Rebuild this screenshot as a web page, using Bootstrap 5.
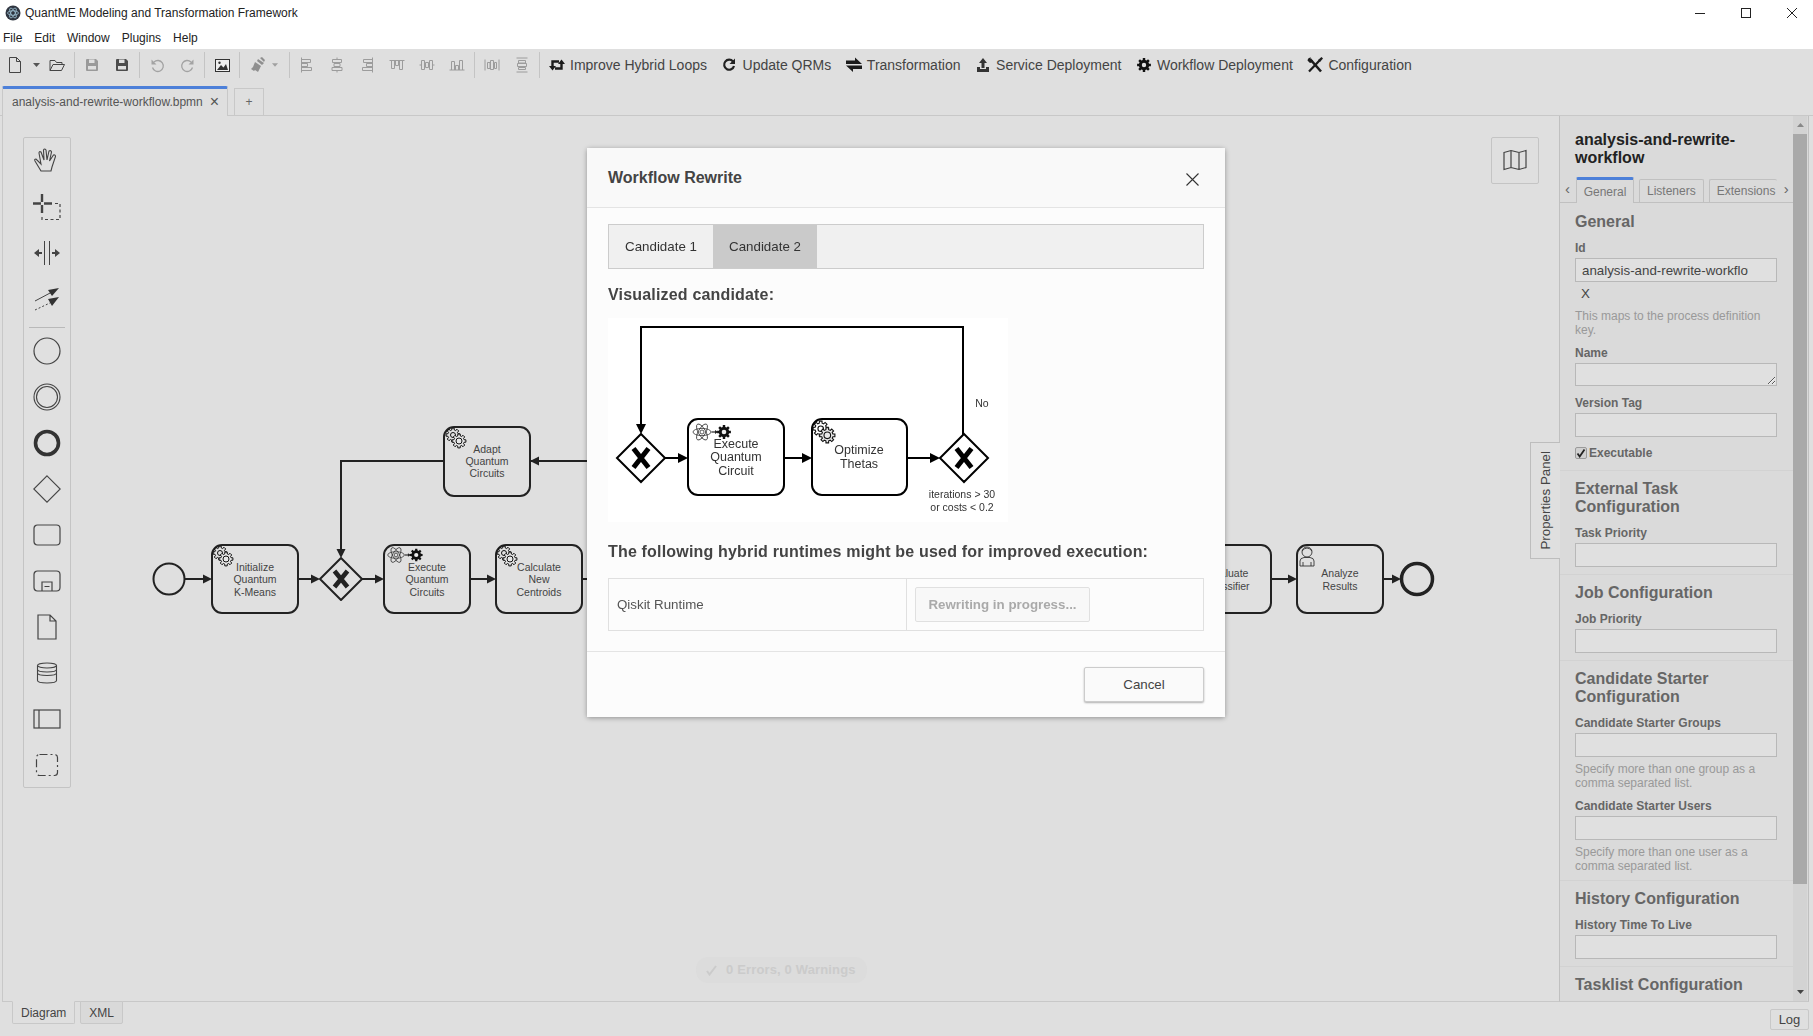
<!DOCTYPE html>
<html lang="en">
<head>
<meta charset="UTF-8" />
<title>QuantME Modeling and Transformation Framework</title>
<link href="https://cdn.jsdelivr.net/npm/bootstrap@5.3.2/dist/css/bootstrap.min.css" rel="stylesheet" />
<style>
html, body { height: 1036px; overflow: hidden; }
body { font-family: "Liberation Sans", Arial, sans-serif; font-size: 13.33px; color: #444; background: #dfdfdf; }
svg { display: block; }

/* native window chrome */
.win-title { height: 25px; background: #fff; font-size: 12px; color: #222; padding-left: 5px; }
.win-title .win-name { margin-left: 4px; }
.win-ctrls { margin-left: auto; }
.win-ctrls svg { margin-right: 16px; }
.win-ctrls .win-last { margin-right: 6px; }
.win-menu { height: 24px; background: #fff; font-size: 12px; color: #222; padding: 2px 0 0 3px; gap: 12px; }

/* toolbar */
.tool-row { height: 37px; padding-bottom: 5px; }
.tool-btn { width: 30px; height: 32px; flex: none; }
.tool-caret { width: 12px; height: 32px; flex: none; }
.tool-sep { width: 1px; height: 26px; background: #c4c4c4; margin: 0 2px; flex: none; }
.tool-sep-wide { margin-left: 5px; }
.tool-sep-end { margin-right: 1px; }
.tool-text { padding: 0 6.6px 0 8px; gap: 5px; font-size: 14px; color: #444; white-space: nowrap; height: 32px; }

/* file tabs */
.tab-strip { height: 29px; padding-left: 2px; gap: 6px; }
.file-tab { width: 226px; height: 30px; border: 1px solid #c8c8c8; border-top: 3px solid #4d80d9; border-bottom: 0; border-radius: 2px 2px 0 0; background: #dfdfdf; font-size: 12px; padding: 0 0 2px 9px; color: #555; position: relative; z-index: 2; }
.file-tab-x { margin-left: 7px; font-size: 16px; line-height: 1; color: #555; }
.plus-tab { width: 30px; height: 27px; margin-top: 2px; border: 1px solid #c8c8c8; border-bottom: 0; font-size: 12px; color: #666; }

/* canvas and side panel */
.work-row { height: 887px; border-top: 1px solid #c8c8c8; }
.canvas-box { width: 1557px; margin-left: 2px; position: relative; border-left: 1px solid #c8c8c8; border-bottom: 1px solid #c8c8c8; flex: none; }
.canvas-svg { position: absolute; left: -1px; top: -1px; }
.canvas-svg text, .cand-svg text { font-family: "Liberation Sans", Arial, sans-serif; text-anchor: middle; }
.palette-box { position: absolute; left: 20px; top: 21px; width: 48px; height: 651px; border: 1px solid #c4c4c4; border-radius: 2px; background: #e0e0e0; }
.palette-item { height: 46px; flex: none; }
.palette-sep { height: 1px; background: #b9b9b9; margin: 5px 5px 0; flex: none; }
.map-btn { position: absolute; left: 1488px; top: 21px; width: 48px; height: 47px; border: 1px solid #c4c4c4; border-radius: 2px; padding-bottom: 2px; }
.status-pill { position: absolute; left: 693px; top: 841px; width: 171px; height: 26px; border-radius: 12px; background: #dcdcdc; color: #cbcbcb; font-size: 13px; font-weight: 700; letter-spacing: .15px; padding-left: 10px; gap: 9px; }

.side-panel { width: 250px; margin-right: 4px; position: relative; background: #dadada; border-left: 1px solid #c0c0c0; border-right: 1px solid #c0c0c0; border-bottom: 1px solid #c8c8c8; flex: none; }
.panel-toggle { position: absolute; right: 100%; top: 326px; width: 30px; height: 117px; border: 1px solid #bdbdbd; border-right: 0; background: #dfdfdf; color: #444; }
.panel-toggle span { writing-mode: vertical-rl; transform: rotate(180deg); font-size: 13.33px; white-space: nowrap; }
.panel-scroll { width: 233px; flex: none; overflow: hidden; }
.panel-name { padding: 15px 15px 0; font-size: 16px; line-height: 18px; font-weight: 700; color: #222; }
.panel-tabs { height: 26px; margin: 10px 0 1px; border-bottom: 1px solid #c0c0c0; font-size: 12px; color: #777; gap: 5px; position: relative; }
.ptab { height: 23px; margin-top: 2px; border: 1px solid #c0c0c0; border-bottom: 0; border-radius: 2px 2px 0 0; padding: 0 7px; white-space: nowrap; }
.ptab-on { width: 58px; height: 26px; margin-top: 0; margin-left: -4px; border-top: 3px solid #4d80d9; justify-content: center; background: #dadada; }
.ptab-arrow { width: 15px; font-size: 15px; color: #666; text-align: center; flex: none; }
.ptab-arrow-end { margin-left: -3px; }
.ptab-last { width: 68px; overflow: hidden; flex: none; border-right: 0; padding-right: 0; }
.prop-group { padding: 9px 16px 7px 15px; border-bottom: 1px solid #d2d2d2; }
.prop-group-first { padding-bottom: 10px; }
.prop-group-tall { padding-bottom: 8px; }
.prop-head { font-size: 16px; line-height: 18px; font-weight: 700; color: #666; margin: 0; }
.prop-label { display: block; font-size: 12px; line-height: 14px; font-weight: 700; color: #666; margin: 10px 0 3px; }
.prop-input.form-control { display: block; height: 24px; min-height: 24px; padding: 0 28px 0 6px; font-size: 13.33px; color: #444; background: #e0e0e0; border: 1px solid #b8b8b8; border-radius: 0; }
textarea.prop-input.form-control { padding: 0; height: 23px; min-height: 23px; }
.prop-hint { font-size: 12px; line-height: 14px; color: #999; margin: 5px 0 -1px; }
.prop-hint-tight { margin-top: 8px; }
.prop-clear { font-size: 13.33px; line-height: 14px; color: #444; margin-top: 5px; padding-left: 6px; height: 14px; }
.prop-check { font-size: 12px; line-height: 14px; font-weight: 700; color: #666; gap: 2px; margin-top: 9px; }
.prop-tick { width: 12px; height: 12px; border: 1px solid #9a9a9a; border-radius: 2px; background: #d0d0d0; flex: none; }
.scroll-col { width: 14px; flex: none; background: #d3d3d3; }
.scroll-thumb { height: 750px; background: #a9a9a9; flex: none; }
.scroll-arrow { height: 18px; flex: none; }

/* bottom bar */
.foot-row { height: 34px; padding-left: 12px; padding-right: 4px; gap: 5px; }
.foot-tab { height: 23px; margin-top: -1px; padding: 0 8px; border: 1px solid #c8c8c8; border-top-color: #dfdfdf; border-radius: 0 0 2px 2px; font-size: 12px; color: #444; position: relative; }
.foot-xml { background: #d9d9d9; border-top-color: #c8c8c8; }
.foot-log { margin-left: auto; height: 21px; margin-top: 7px; width: 39px; justify-content: center; border: 1px solid #c8c8c8; border-radius: 2px; font-size: 13px; color: #444; }

/* rewrite dialog */
.wf-dialog.modal-dialog { max-width: 638px; width: 638px; margin: 148px 0 0 587px; }
.wf-content.modal-content { height: 569px; background: #fcfcfc; border: 0; border-radius: 2px; box-shadow: 0 1px 5px rgba(0,0,0,.35); color: #444; }
.wf-header.modal-header { height: 60px; padding: 0 21px; background: #f9f9f9; border-bottom: 1px solid #e4e4e4; border-radius: 0; flex: none; }
.wf-title.modal-title { font-size: 16px; font-weight: 700; color: #444; }
.wf-close { margin-left: auto; margin-right: 5px; margin-top: 3px; padding: 0; border: 0; background: none; }
.wf-body.modal-body { padding: 16px 21px 0 21px; flex: none; height: 443px; }
.cand-bar { height: 45px; border: 1px solid #ccc; background: #f0f0f0; }
.cand-tab { width: 104px; font-size: 13.33px; color: #333; }
.cand-tab-on { background: #cacaca; }
.wf-sub { font-size: 16px; line-height: 18px; font-weight: 700; letter-spacing: .18px; color: #444; margin: 17px 0 14px; }
.wf-sub-b { margin-top: 21px; margin-bottom: 17px; }
.runtime-grid { height: 53px; border: 1px solid #e0e0e0; }
.runtime-cell { width: 298px; padding-left: 8px; font-size: 13.33px; color: #555; }
.runtime-cell + .runtime-cell { border-left: 1px solid #e0e0e0; }
.wf-progress.btn { width: 175px; height: 35px; padding: 0; font-size: 13.33px; font-weight: 700; color: #aaa; background: #f8f8f8; border: 1px solid #e0e0e0; border-radius: 2px; opacity: 1; }
.wf-footer.modal-footer { height: 66px; padding: 0 21px 0 0; background: #fcfcfc; border-top: 1px solid #e4e4e4; border-radius: 0; justify-content: flex-end; flex: none; }
.wf-cancel.btn { width: 120px; height: 35px; margin: 0; padding: 0; font-size: 13.33px; color: #444; background: #fafafa; border: 1px solid #ccc; border-radius: 2px; box-shadow: 0 1px 2px rgba(0,0,0,.3); }
</style>
</head>
<body>

<div class="win-title d-flex align-items-center">
  <svg width="16" height="16" viewBox="0 0 16 16"><circle cx="8" cy="8" r="7.5" fill="#2f3540"/><g fill="none" stroke="#9fc3d6" stroke-width=".8"><ellipse cx="8" cy="8" rx="5.5" ry="2.2"/><ellipse cx="8" cy="8" rx="5.5" ry="2.2" transform="rotate(60 8 8)"/><ellipse cx="8" cy="8" rx="5.5" ry="2.2" transform="rotate(120 8 8)"/></g></svg>
  <span class="win-name">QuantME Modeling and Transformation Framework</span>
  <div class="win-ctrls d-flex align-items-center">
    <svg width="30" height="12" viewBox="0 0 30 12"><path d="M10 6.5h10" stroke="#222"/></svg>
    <svg width="30" height="12" viewBox="0 0 30 12"><rect x="10.5" y="1.5" width="9" height="9" fill="none" stroke="#222"/></svg>
    <svg class="win-last" width="30" height="12" viewBox="0 0 30 12"><path d="M10 1l10 10M20 1L10 11" stroke="#222" fill="none"/></svg>
  </div>
</div>
<div class="win-menu d-flex align-items-center">
  <span>File</span><span>Edit</span><span>Window</span><span>Plugins</span><span>Help</span>
</div>

<div class="tool-row d-flex align-items-center">
  <span class="tool-btn d-flex align-items-center justify-content-center"><svg width="16" height="18" viewBox="0 0 16 18" fill="none" stroke="#444"><path d="M2.5 1.5h7l4 4v11h-11zM9.5 1.5v4h4"/></svg></span>
  <span class="tool-caret d-flex align-items-center justify-content-center"><svg width="7" height="4" viewBox="0 0 7 4"><path d="M0 0h7L3.5 4z" fill="#555"/></svg></span>
  <span class="tool-btn d-flex align-items-center justify-content-center"><svg width="16" height="14" viewBox="0 0 16 14" fill="none" stroke="#444"><path d="M1 12.5v-10h5l1.5 2H13v2M1 12.500h11.500l3-6H4z"/></svg></span>
  <span class="tool-sep"></span>
  <span class="tool-btn d-flex align-items-center justify-content-center"><svg width="14" height="14" viewBox="0 0 14 14"><path d="M2 1h9l2 2v9a1 1 0 0 1-1 1H2a1 1 0 0 1-1-1V2a1 1 0 0 1 1-1z" fill="#9a9a9a"/><rect x="4" y="1.500" width="5.500" height="3.500" fill="#dfdfdf"/><rect x="3" y="8" width="8" height="3.500" fill="#dfdfdf"/></svg></span>
  <span class="tool-btn d-flex align-items-center justify-content-center"><svg width="14" height="14" viewBox="0 0 14 14"><path d="M2 1h9l2 2v9a1 1 0 0 1-1 1H2a1 1 0 0 1-1-1V2a1 1 0 0 1 1-1z" fill="#4c4c4c"/><rect x="4" y="1.500" width="5.500" height="3.500" fill="#dfdfdf"/><rect x="3" y="8" width="8" height="3.500" fill="#dfdfdf"/></svg></span>
  <span class="tool-sep"></span>
  <span class="tool-btn d-flex align-items-center justify-content-center"><svg width="15" height="15" viewBox="0 0 15 15" fill="none" stroke="#a3a3a3" stroke-width="1.300"><path d="M4 4a5.500 5.500 0 1 1-1.500 5.500"/><path d="M1.500 1.500v5h5z" fill="#a3a3a3" stroke="none"/></svg></span>
  <span class="tool-btn d-flex align-items-center justify-content-center"><svg width="15" height="15" viewBox="0 0 15 15" fill="none" stroke="#a3a3a3" stroke-width="1.300"><path d="M11 4a5.500 5.500 0 1 0 1.500 5.500"/><path d="M13.500 1.500v5h-5z" fill="#a3a3a3" stroke="none"/></svg></span>
  <span class="tool-sep"></span>
  <span class="tool-btn d-flex align-items-center justify-content-center"><svg width="15" height="13" viewBox="0 0 15 13"><rect x=".5" y=".5" width="14" height="12" fill="#efefef" stroke="#333"/><path d="M2 11l4-5 2.500 2.500L11 5l2 6z" fill="#333"/><circle cx="4.500" cy="3.700" r="1.200" fill="#333"/></svg></span>
  <span class="tool-sep"></span>
  <span class="tool-btn d-flex align-items-center justify-content-center"><svg width="17" height="16" viewBox="0 0 17 16"><path d="M11 1l2-1 3 3-1 2zM9 2l6 4-2 2-5-4zM6 5l6 4-3 6-3-2-1 1-3-2 2-2z" fill="#8f8f8f"/></svg></span>
  <span class="tool-caret d-flex align-items-center"><svg width="6" height="4" viewBox="0 0 7 4"><path d="M0 0h7L3.500 4z" fill="#a0a0a0"/></svg></span>
  <span class="tool-sep tool-sep-wide"></span>
  <span class="tool-btn d-flex align-items-center justify-content-center"><svg width="14" height="16" viewBox="0 0 14 16" fill="none" stroke="#9c9c9c"><path d="M1.500 .5v15M1.500 2.500h9v3h-9M1.500 6.500h6v3h-6M1.500 10.500h10v3h-10"/></svg></span>
  <span class="tool-btn d-flex align-items-center justify-content-center"><svg width="14" height="16" viewBox="0 0 14 16" fill="none" stroke="#9c9c9c"><path d="M7 .5v2M7 5.500v1M7 9.500v1M7 13.500v2M2.500 2.500h9v3h-9zM4 6.500h6v3H4zM2 10.500h10v3H2z"/></svg></span>
  <span class="tool-btn d-flex align-items-center justify-content-center"><svg width="14" height="16" viewBox="0 0 14 16" fill="none" stroke="#9c9c9c"><path d="M12.500 .5v15M12.500 2.500h-9v3h9M12.500 6.500h-6v3h6M12.500 10.500h-10v3h10"/></svg></span>
  <span class="tool-btn d-flex align-items-center justify-content-center"><svg width="16" height="12" viewBox="0 0 16 12" fill="none" stroke="#9c9c9c"><path d="M.5 1.500h15M2.500 1.500v8h3v-8M6.500 1.500v5h3v-5M10.500 1.500v9h3v-9"/></svg></span>
  <span class="tool-btn d-flex align-items-center justify-content-center"><svg width="16" height="12" viewBox="0 0 16 12" fill="none" stroke="#9c9c9c"><path d="M2.500 1.500h3v9h-3zM6.500 3.500h3v5h-3zM10.500 1.500h3v9h-3zM.5 6h2M5.500 6h1M9.500 6h1M13.500 6h2"/></svg></span>
  <span class="tool-btn d-flex align-items-center justify-content-center"><svg width="16" height="12" viewBox="0 0 16 12" fill="none" stroke="#9c9c9c"><path d="M.5 11h15M2.500 11V2.500h3V11M6.500 11V6.500h3V11M10.500 11V1.500h3V11"/></svg></span>
  <span class="tool-sep"></span>
  <span class="tool-btn d-flex align-items-center justify-content-center"><svg width="16" height="14" viewBox="0 0 16 14" fill="none" stroke="#9c9c9c"><path d="M1 1.500v11M15 1.500v11M3.500 4.500h2.500v6H3.500zM6.500 2.500h3v9h-3zM10.500 4.500h2v6h-2z"/></svg></span>
  <span class="tool-btn d-flex align-items-center justify-content-center"><svg width="14" height="16" viewBox="0 0 14 16" fill="none" stroke="#9c9c9c"><path d="M1.500 1h11M1.500 15h11M3.500 3.500h7v2.500h-7zM2.500 6.500h9v3h-9zM3.500 10.500h7v2h-7z"/></svg></span>
  <span class="tool-sep tool-sep-end"></span>
  <span class="tool-text d-flex align-items-center"><svg width="16" height="14" viewBox="0 0 16 14"><path d="M3.500 9V3.500H10M12.500 5v5.500H6" fill="none" stroke="#1c1c1c" stroke-width="2.400"/><path d="M0 8h7l-3.500 4.500zM9 6h7l-3.500-4.500z" fill="#1c1c1c"/></svg>Improve Hybrid Loops</span>
  <span class="tool-text d-flex align-items-center"><svg width="16" height="14" viewBox="0 0 16 14"><path d="M11 3.500a5 5 0 1 0 1 4.500" fill="none" stroke="#222" stroke-width="2.200"/><path d="M13 .5v5.500h-5.500z" fill="#222"/></svg>Update QRMs</span>
  <span class="tool-text d-flex align-items-center"><svg width="16" height="16" viewBox="0 0 16 16" fill="#1c1c1c"><path d="M0 3.500h9V.5l7 6.500H0zM16 8.500H0l7 6.500v-3h9z"/></svg>Transformation</span>
  <span class="tool-text d-flex align-items-center"><svg width="16" height="15" viewBox="0 0 16 15" fill="#333"><path d="M8 0l4 5H9.500v5h-3V5H4zM2 9h3v2h6V9h3v5H2z"/></svg>Service Deployment</span>
  <span class="tool-text d-flex align-items-center"><svg width="16" height="16" viewBox="-8 -8 16 16"><path fill-rule="evenodd" fill="#111" d="M6.900-1.200L6.900 1.200L5.050 1.260L4.460 2.680L5.730 4.010L4.010 5.730L2.680 4.460L1.260 5.050L1.200 6.900L-1.200 6.900L-1.260 5.050L-2.680 4.460L-4.010 5.730L-5.730 4.010L-4.460 2.680L-5.050 1.260L-6.900 1.200L-6.900-1.200L-5.050-1.260L-4.460-2.680L-5.730-4.010L-4.010-5.730L-2.680-4.460L-1.260-5.050L-1.200-6.900L1.200-6.900L1.260-5.050L2.680-4.460L4.010-5.730L5.730-4.010L4.460-2.680L5.050-1.260ZM2.200 0A2.200 2.200 0 1 0-2.200 0A2.200 2.200 0 1 0 2.200 0Z"/></svg>Workflow Deployment</span>
  <span class="tool-text d-flex align-items-center"><svg width="16" height="16" viewBox="0 0 16 16" fill="none" stroke="#1c1c1c"><path d="M3 2L14 14.500" stroke-width="2.600"/><path d="M12.500 3.500L2 14.500" stroke-width="2.200"/><path d="M.5 3.500a3.500 3.500 0 0 1 3.500-3l-1 2 1.500 1.500 1.500-1 0 2-3 1z" fill="#1c1c1c" stroke="none"/><path d="M11 3l3.500-3 1.500 1.500-3 3.500z" fill="#1c1c1c" stroke="none"/></svg>Configuration</span>
</div>

<div class="tab-strip d-flex align-items-start">
  <div class="file-tab d-flex align-items-center">analysis-and-rewrite-workflow.bpmn<span class="file-tab-x">×</span></div>
  <div class="plus-tab d-flex align-items-center justify-content-center">+</div>
</div>

<div class="work-row d-flex">
  <div class="canvas-box">
    <svg class="canvas-svg" width="1557" height="887" viewBox="2 115 1557 887">
      <defs>
        <path id="gearShape" d="M6.900-1.200L6.900 1.200L5.050 1.260L4.460 2.680L5.730 4.010L4.010 5.730L2.680 4.460L1.260 5.050L1.200 6.900L-1.200 6.900L-1.260 5.050L-2.680 4.460L-4.010 5.730L-5.730 4.010L-4.460 2.680L-5.050 1.260L-6.900 1.200L-6.900-1.200L-5.050-1.260L-4.460-2.680L-5.730-4.010L-4.010-5.730L-2.680-4.460L-1.260-5.050L-1.200-6.900L1.200-6.900L1.260-5.050L2.680-4.460L4.010-5.730L5.730-4.010L4.460-2.680L5.050-1.260Z"/>
        <g id="gearPair" stroke="#111" stroke-width="1">
          <use href="#gearShape" x="-3" y="-3" fill="none"/><circle cx="-3" cy="-3" r="2.500" fill="none"/>
          <use href="#gearShape" x="3" y="3" fill="#e8e8e8"/><circle cx="3" cy="3" r="3" fill="none"/>
        </g>
        <g id="atomGear">
          <g fill="none" stroke="#333" stroke-width=".8"><ellipse rx="9" ry="3.600"/><ellipse rx="9" ry="3.600" transform="rotate(60)"/><ellipse rx="9" ry="3.600" transform="rotate(120)"/><circle r="2"/></g>
          <path d="M9.500 0h5" stroke="#222" stroke-width="1.200"/><path d="M16 0l-3-2v4z" fill="#222"/>
          <g transform="translate(22 0)"><use href="#gearShape" fill="#111"/><circle r="2.300" fill="#eee"/></g>
        </g>
        <path id="gatewayX" d="M-6.500-8L6.500 8M6.500-8L-6.500 8" stroke="#222" stroke-width="4.600" fill="none"/>
      </defs>

      <g fill="none" stroke="#222" stroke-width="2">
        <circle cx="169" cy="579" r="15.500"/>
        <path d="M184 579h22M298 579h16M362 579h16M470 579h20M582 579h20M1271 579h20M1383 579h14"/>
        <path d="M588 461H341v90"/>
        <g fill="#e0e0e0" stroke-linejoin="round">
          <rect x="212" y="545" width="86" height="68" rx="10"/>
          <rect x="384" y="545" width="86" height="68" rx="10"/>
          <rect x="496" y="545" width="86" height="68" rx="10"/>
          <rect x="444" y="427" width="86" height="69" rx="10"/>
          <rect x="1185" y="545" width="86" height="68" rx="10"/>
          <rect x="1297" y="545" width="86" height="68" rx="10"/>
          <path d="M341 558l21 21-21 21-21-21z"/>
        </g>
        <circle cx="1417" cy="579" r="15.500" stroke-width="3.500"/>
      </g>
      <g fill="#222">
        <path d="M212 579l-9-4.500v9zM320 579l-9-4.500v9zM384 579l-9-4.500v9zM496 579l-9-4.500v9zM1297 579l-9-4.500v9zM1401 579l-9-4.500v9zM341 558l-4.500-9h9zM530 461l9-4.500v9z"/>
      </g>
      <use href="#gatewayX" x="341" y="579"/>
      <use href="#gearPair" x="223" y="556"/>
      <use href="#gearPair" x="507" y="556"/>
      <use href="#gearPair" x="456" y="438"/>
      <use href="#atomGear" transform="translate(396 555) scale(.92)"/>
      <g fill="none" stroke="#333" stroke-width=".9"><circle cx="1307" cy="552" r="5"/><path d="M1300 566v-5q0-3 4-3.500h6q4 .5 4 3.500v5zM1302 551q5-6 10 0M1303 566v-4M1311 566v-4"/></g>
      <g font-size="10.500" fill="#444">
        <text x="255" y="571">Initialize</text><text x="255" y="583">Quantum</text><text x="255" y="596">K-Means</text>
        <text x="427" y="571">Execute</text><text x="427" y="583">Quantum</text><text x="427" y="596">Circuits</text>
        <text x="539" y="571">Calculate</text><text x="539" y="583">New</text><text x="539" y="596">Centroids</text>
        <text x="487" y="453">Adapt</text><text x="487" y="465">Quantum</text><text x="487" y="477">Circuits</text>
        <text x="1228" y="577">Evaluate</text><text x="1228" y="590">Classifier</text>
        <text x="1340" y="577">Analyze</text><text x="1340" y="590">Results</text>
      </g>
    </svg>

    <div class="palette-box d-flex flex-column">
      <div class="palette-item d-flex align-items-center justify-content-center"><svg width="28" height="26" viewBox="0 0 28 26" fill="none" stroke="#444" stroke-width="1.100"><path d="M8 23L2 13q-1-2 1-2l5 5L6 5q0-2 2-1l3 8-.5-10q1-2 2.500 0l1 10 2-9q2-1 2.500 1l-2 9 4-6q2-.5 2 1.500L19 19l-1 4z"/></svg></div>
      <div class="palette-item d-flex align-items-center justify-content-center"><svg width="28" height="28" viewBox="0 0 28 28" fill="none" stroke="#444"><path d="M9 1v8M9 12v8M0 10.500h8M11 10.500h8" stroke-width="2.400"/><path d="M22 10.500h5v16H9v-4" stroke-dasharray="3 2.500" stroke-width="1.200"/></svg></div>
      <div class="palette-item d-flex align-items-center justify-content-center"><svg width="28" height="24" viewBox="0 0 28 24" fill="#444"><path d="M11.500 0v24M16.500 0v24" stroke="#444" fill="none"/><path d="M1 12l5-4v3h3v2H6v3zM27 12l-5-4v3h-3v2h3v3z"/></svg></div>
      <div class="palette-item d-flex align-items-center justify-content-center"><svg width="28" height="24" viewBox="0 0 28 24" fill="none" stroke="#444"><path d="M2 14L19 5"/><path d="M2 23l17-8" stroke-dasharray="2 2"/><path d="M26 1l-11 2 4 6zM26 10l-11 2 4 7z" fill="#333" stroke="none"/></svg></div>
      <div class="palette-sep"></div>
      <div class="palette-item d-flex align-items-center justify-content-center"><svg width="28" height="28" viewBox="0 0 28 28" fill="none" stroke="#444" stroke-width="1.200"><circle cx="14" cy="14" r="13"/></svg></div>
      <div class="palette-item d-flex align-items-center justify-content-center"><svg width="28" height="28" viewBox="0 0 28 28" fill="none" stroke="#444" stroke-width="1.100"><circle cx="14" cy="14" r="13"/><circle cx="14" cy="14" r="10.500"/></svg></div>
      <div class="palette-item d-flex align-items-center justify-content-center"><svg width="28" height="28" viewBox="0 0 28 28" fill="none" stroke="#333" stroke-width="3.600"><circle cx="14" cy="14" r="11.500"/></svg></div>
      <div class="palette-item d-flex align-items-center justify-content-center"><svg width="28" height="28" viewBox="0 0 28 28" fill="none" stroke="#444" stroke-width="1.100"><path d="M14 .8L27.200 14 14 27.200.8 14z"/></svg></div>
      <div class="palette-item d-flex align-items-center justify-content-center"><svg width="28" height="22" viewBox="0 0 28 22" fill="none" stroke="#444" stroke-width="1.200"><rect x="1" y="1" width="26" height="20" rx="3.500"/></svg></div>
      <div class="palette-item d-flex align-items-center justify-content-center"><svg width="28" height="22" viewBox="0 0 28 22" fill="none" stroke="#444" stroke-width="1.200"><rect x="1" y="1" width="26" height="20" rx="3.500"/><path d="M9 21v-9h10v9M11.500 16.500h5"/></svg></div>
      <div class="palette-item d-flex align-items-center justify-content-center"><svg width="22" height="26" viewBox="0 0 22 26" fill="none" stroke="#444" stroke-width="1.200"><path d="M2 1h12l6 6v18H2zM14 1v6h6"/></svg></div>
      <div class="palette-item d-flex align-items-center justify-content-center"><svg width="22" height="22" viewBox="0 0 22 22" fill="none" stroke="#444" stroke-width="1.100"><ellipse cx="11" cy="3.500" rx="9.500" ry="2.500"/><path d="M1.500 3.500v15c0 1.500 4 2.500 9.500 2.500s9.500-1 9.500-2.500v-15M1.500 7.500c0 1.500 4 2.500 9.500 2.500s9.500-1 9.500-2.500M1.500 11c0 1.500 4 2.500 9.500 2.500s9.500-1 9.500-2.500"/></svg></div>
      <div class="palette-item d-flex align-items-center justify-content-center"><svg width="28" height="20" viewBox="0 0 28 20" fill="none" stroke="#444" stroke-width="1.200"><rect x="1" y="1" width="26" height="18"/><path d="M6 1v18"/></svg></div>
      <div class="palette-item d-flex align-items-center justify-content-center"><svg width="24" height="24" viewBox="0 0 24 24" fill="none" stroke="#444" stroke-width="1.200"><rect x="1.500" y="1.500" width="21" height="21" rx="3" stroke-dasharray="8 3 2 3"/></svg></div>
    </div>

    <div class="map-btn d-flex align-items-center justify-content-center"><svg width="24" height="22" viewBox="0 0 24 22" fill="none" stroke="#444" stroke-width="1.200"><path d="M1 3.500l7-2 8 2 7-2v17l-7 2-8-2-7 2zM8 1.500v17M16 3.500v17"/></svg></div>

    <div class="status-pill d-flex align-items-center"><svg width="11" height="11" viewBox="0 0 11 11"><path d="M1 6l2.500 3.500L10 1" fill="none" stroke="#cbcbcb" stroke-width="2"/></svg>0 Errors, 0 Warnings</div>
  </div>

  <div class="side-panel d-flex">
    <div class="panel-toggle d-flex align-items-center justify-content-center"><span>Properties Panel</span></div>
    <div class="panel-scroll">
      <div class="panel-name">analysis-and-rewrite-workflow</div>
      <div class="panel-tabs d-flex">
        <span class="ptab-arrow align-self-center">‹</span>
        <span class="ptab ptab-on d-flex align-items-center">General</span>
        <span class="ptab d-flex align-items-center">Listeners</span>
        <span class="ptab ptab-last d-flex align-items-center">Extensions</span>
        <span class="ptab-arrow ptab-arrow-end align-self-center">›</span>
      </div>

      <div class="prop-group prop-group-first">
        <h3 class="prop-head">General</h3>
        <label class="prop-label">Id</label>
        <input class="form-control prop-input" value="analysis-and-rewrite-workflow" />
        <div class="prop-clear">X</div>
        <div class="prop-hint prop-hint-tight">This maps to the process definition key.</div>
        <label class="prop-label">Name</label>
        <textarea class="form-control prop-input"></textarea>
        <label class="prop-label">Version Tag</label>
        <input class="form-control prop-input" />
        <div class="prop-check d-flex align-items-center"><span class="prop-tick d-flex align-items-center justify-content-center"><svg width="10" height="10" viewBox="0 0 10 10"><path d="M1.500 5.500l2.200 3L8.500 1.500" fill="none" stroke="#222" stroke-width="1.800"/></svg></span>Executable</div>
      </div>
      <div class="prop-group">
        <h3 class="prop-head">External Task Configuration</h3>
        <label class="prop-label">Task Priority</label>
        <input class="form-control prop-input" />
      </div>
      <div class="prop-group">
        <h3 class="prop-head">Job Configuration</h3>
        <label class="prop-label">Job Priority</label>
        <input class="form-control prop-input" />
      </div>
      <div class="prop-group prop-group-tall">
        <h3 class="prop-head">Candidate Starter Configuration</h3>
        <label class="prop-label">Candidate Starter Groups</label>
        <input class="form-control prop-input" />
        <div class="prop-hint">Specify more than one group as a comma separated list.</div>
        <label class="prop-label">Candidate Starter Users</label>
        <input class="form-control prop-input" />
        <div class="prop-hint">Specify more than one user as a comma separated list.</div>
      </div>
      <div class="prop-group">
        <h3 class="prop-head">History Configuration</h3>
        <label class="prop-label">History Time To Live</label>
        <input class="form-control prop-input" />
      </div>
      <div class="prop-group">
        <h3 class="prop-head">Tasklist Configuration</h3>
      </div>
    </div>
    <div class="scroll-col d-flex flex-column">
      <div class="scroll-arrow d-flex align-items-center justify-content-center"><svg width="7" height="4" viewBox="0 0 7 4"><path d="M3.500 0L7 4H0z" fill="#888"/></svg></div>
      <div class="scroll-thumb"></div>
      <div class="scroll-arrow mt-auto d-flex align-items-center justify-content-center"><svg width="7" height="4" viewBox="0 0 7 4"><path d="M0 0h7L3.500 4z" fill="#444"/></svg></div>
    </div>
  </div>
</div>

<div class="foot-row d-flex align-items-start">
  <div class="foot-tab d-flex align-items-center">Diagram</div>
  <div class="foot-tab foot-xml d-flex align-items-center">XML</div>
  <div class="foot-log d-flex align-items-center">Log</div>
</div>

<!-- Dialog that is open over the editor -->
<div class="modal d-block" tabindex="-1">
  <div class="modal-dialog wf-dialog">
    <div class="modal-content wf-content">
      <div class="modal-header wf-header">
        <h5 class="modal-title wf-title">Workflow Rewrite</h5>
        <button type="button" class="wf-close"><svg width="13" height="13" viewBox="0 0 13 13"><path d="M.5.500l12 12M12.500.500l-12 12" stroke="#333" stroke-width="1.100" fill="none"/></svg></button>
      </div>
      <div class="modal-body wf-body">
        <div class="cand-bar d-flex">
          <div class="cand-tab d-flex align-items-center justify-content-center">Candidate 1</div>
          <div class="cand-tab cand-tab-on d-flex align-items-center justify-content-center">Candidate 2</div>
        </div>
        <div class="wf-sub">Visualized candidate:</div>
        <svg class="cand-svg" width="400" height="204" viewBox="608 318 400 204">
          <rect x="608" y="318" width="400" height="204" fill="#fff"/>
          <g fill="none" stroke="#000" stroke-width="2">
            <path d="M963 437V327H641v100M665 458h17M784 458h22M907 458h26"/>
            <g fill="#fff">
              <rect x="688" y="419" width="96" height="76" rx="10"/>
              <rect x="812" y="419" width="95" height="76" rx="10"/>
              <path d="M641 434l24 24-24 24-24-24zM964 434l24 24-24 24-24-24z"/>
            </g>
          </g>
          <path d="M641 434l-5-10h10zM688 458l-10-5v10zM812 458l-10-5v10zM940 458l-10-5v10z" fill="#000"/>
          <g stroke="#000" stroke-width="5" fill="none"><path d="M633.500 448.500l15 19M648.500 448.500l-15 19M956.500 448.500l15 19M971.500 448.500l-15 19"/></g>
          <use href="#atomGear" transform="translate(702 432) scale(1)"/>
          <g transform="translate(824 432)"><use href="#gearPair" transform="scale(1.100)"/></g>
          <g font-size="12.500" fill="#333">
            <text x="736" y="448">Execute</text><text x="736" y="461">Quantum</text><text x="736" y="475">Circuit</text>
            <text x="859" y="454">Optimize</text><text x="859" y="468">Thetas</text>
          </g>
          <g font-size="10.500" fill="#333">
            <text x="982" y="407">No</text>
            <text x="962" y="498">iterations &gt; 30</text>
            <text x="962" y="511">or costs &lt; 0.2</text>
          </g>
        </svg>
        <div class="wf-sub wf-sub-b">The following hybrid runtimes might be used for improved execution:</div>
        <div class="runtime-grid d-flex">
          <div class="runtime-cell d-flex align-items-center">Qiskit Runtime</div>
          <div class="runtime-cell d-flex align-items-center"><button class="btn wf-progress" disabled>Rewriting in progress...</button></div>
        </div>
      </div>
      <div class="modal-footer wf-footer">
        <button type="button" class="btn wf-cancel">Cancel</button>
      </div>
    </div>
  </div>
</div>

<script src="https://cdn.jsdelivr.net/npm/bootstrap@5.3.2/dist/js/bootstrap.bundle.min.js"></script>
</body>
</html>
